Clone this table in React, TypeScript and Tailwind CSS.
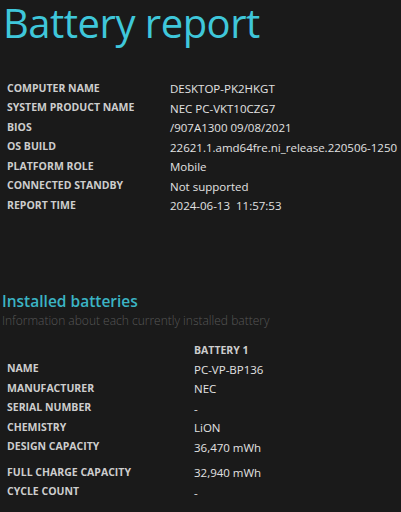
const systemInfo = [
  ['COMPUTER NAME', 'DESKTOP-PK2HKGT'],
  ['SYSTEM PRODUCT NAME', 'NEC PC-VKT10CZG7'],
  ['BIOS', '/907A1300 09/08/2021'],
  ['OS BUILD', '22621.1.amd64fre.ni_release.220506-1250'],
  ['PLATFORM ROLE', 'Mobile'],
  ['CONNECTED STANDBY', 'Not supported'],
  ['REPORT TIME', '2024-06-13\u00a0\u00a011:57:53'],
]

const batteryInfo = [
  ['NAME', 'PC-VP-BP136'],
  ['MANUFACTURER', 'NEC'],
  ['SERIAL NUMBER', '-'],
  ['CHEMISTRY', 'LiON'],
  ['DESIGN CAPACITY', '36,470 mWh'],
]

const batteryInfo2 = [
  ['FULL CHARGE CAPACITY', '32,940 mWh'],
  ['CYCLE COUNT', '-'],
]

function Row({ label, value, col }: { label: string; value: string; col: string }) {
  return (
    <div className="flex items-center h-[19.5px]">
      <div className={`${col} shrink-0 pl-[7px] text-[10.5px] font-bold text-[#cdcdcd]`}>
        {label}
      </div>
      <div className="text-[11.5px] text-[#e2e2e2] whitespace-nowrap">{value}</div>
    </div>
  )
}

export default function App() {
  return (
    <div className="w-[401px] h-[512px] overflow-hidden bg-[#1a1a1a] font-['Open_Sans',sans-serif]">
      <h1 className="pl-[3px] h-[79px] text-[40px] leading-[46px] text-[#3fc7da] tracking-[-0.5px]">
        Battery report
      </h1>

      <div className="flex flex-col">
        {systemInfo.map(([label, value]) => (
          <Row key={label} label={label} value={value} col="w-[170px]" />
        ))}
      </div>

      <div className="mt-[75px] pl-[2px]">
        <h2 className="text-[15.5px] leading-[21px] font-semibold text-[#3bb4c4]">Installed batteries</h2>
        <p className="text-[12px] leading-[18px] font-light text-[#575757]">
          Information about each currently installed battery
        </p>
      </div>

      <div className="mt-[12px] flex flex-col">
        <div className="flex items-center h-[18px]">
          <div className="w-[194px] shrink-0" />
          <div className="text-[10.5px] font-bold text-[#cdcdcd]">BATTERY 1</div>
        </div>
        {batteryInfo.map(([label, value]) => (
          <Row key={label} label={label} value={value} col="w-[194px]" />
        ))}
        <div className="h-[6px]" />
        {batteryInfo2.map(([label, value]) => (
          <Row key={label} label={label} value={value} col="w-[194px]" />
        ))}
      </div>
    </div>
  )
}
